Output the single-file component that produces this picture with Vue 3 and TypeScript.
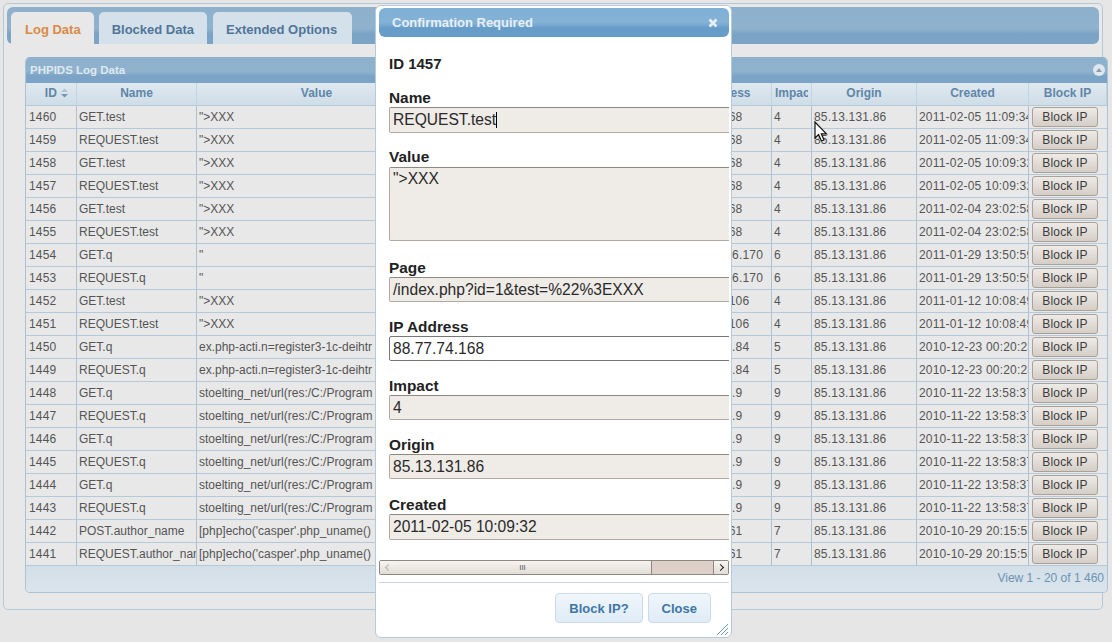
<script setup lang="ts">
interface LogRow {
  id: number;
  name: string;
  value: string;
  ip: string;
  impact: number;
  created: string;
}

const rows: LogRow[] = [
  { id: 1460, name: 'GET.test', value: '">XXX', ip: '88.77.74.168', impact: 4, created: '2011-02-05 11:09:34' },
  { id: 1459, name: 'REQUEST.test', value: '">XXX', ip: '88.77.74.168', impact: 4, created: '2011-02-05 11:09:34' },
  { id: 1458, name: 'GET.test', value: '">XXX', ip: '88.77.74.168', impact: 4, created: '2011-02-05 10:09:32' },
  { id: 1457, name: 'REQUEST.test', value: '">XXX', ip: '88.77.74.168', impact: 4, created: '2011-02-05 10:09:32' },
  { id: 1456, name: 'GET.test', value: '">XXX', ip: '88.77.74.168', impact: 4, created: '2011-02-04 23:02:58' },
  { id: 1455, name: 'REQUEST.test', value: '">XXX', ip: '88.77.74.168', impact: 4, created: '2011-02-04 23:02:58' },
  { id: 1454, name: 'GET.q', value: '"', ip: '213.149.146.170', impact: 6, created: '2011-01-29 13:50:59' },
  { id: 1453, name: 'REQUEST.q', value: '"', ip: '213.149.146.170', impact: 6, created: '2011-01-29 13:50:59' },
  { id: 1452, name: 'GET.test', value: '">XXX', ip: '88.77.174.106', impact: 4, created: '2011-01-12 10:08:49' },
  { id: 1451, name: 'REQUEST.test', value: '">XXX', ip: '88.77.174.106', impact: 4, created: '2011-01-12 10:08:49' },
  { id: 1450, name: 'GET.q', value: 'ex.php-acti.n=register3-1c-deihtr', ip: '88.177.174.84', impact: 5, created: '2010-12-23 00:20:23' },
  { id: 1449, name: 'REQUEST.q', value: 'ex.php-acti.n=register3-1c-deihtr', ip: '88.177.174.84', impact: 5, created: '2010-12-23 00:20:23' },
  { id: 1448, name: 'GET.q', value: 'stoelting_net/url(res:/C:/Program', ip: '88.177.174.9', impact: 9, created: '2010-11-22 13:58:37' },
  { id: 1447, name: 'REQUEST.q', value: 'stoelting_net/url(res:/C:/Program', ip: '88.177.174.9', impact: 9, created: '2010-11-22 13:58:37' },
  { id: 1446, name: 'GET.q', value: 'stoelting_net/url(res:/C:/Program', ip: '88.177.174.9', impact: 9, created: '2010-11-22 13:58:37' },
  { id: 1445, name: 'REQUEST.q', value: 'stoelting_net/url(res:/C:/Program', ip: '88.177.174.9', impact: 9, created: '2010-11-22 13:58:37' },
  { id: 1444, name: 'GET.q', value: 'stoelting_net/url(res:/C:/Program', ip: '88.177.174.9', impact: 9, created: '2010-11-22 13:58:37' },
  { id: 1443, name: 'REQUEST.q', value: 'stoelting_net/url(res:/C:/Program', ip: '88.177.174.9', impact: 9, created: '2010-11-22 13:58:37' },
  { id: 1442, name: 'POST.author_name', value: "[php]echo('casper'.php_uname()", ip: '88.77.74.161', impact: 7, created: '2010-10-29 20:15:53' },
  { id: 1441, name: 'REQUEST.author_name', value: "[php]echo('casper'.php_uname()", ip: '88.77.74.161', impact: 7, created: '2010-10-29 20:15:53' },
];

const tabs = ['Log Data', 'Blocked Data', 'Extended Options'];
const columns = [
  { title: 'ID', width: 51 },
  { title: 'Name', width: 120 },
  { title: 'Value', width: 240 },
  { title: 'Page', width: 231 },
  { title: 'IP Address', width: 104 },
  { title: 'Impact', width: 40 },
  { title: 'Origin', width: 105 },
  { title: 'Created', width: 112 },
  { title: 'Block IP', width: 78 },
];
</script>

<template>
  <div class="page">
    <div class="tabs-panel">
      <div class="tab-bar">
        <span v-for="(t, i) in tabs" :key="t" class="tab" :class="{ active: i === 0 }">{{ t }}</span>
      </div>
      <div class="grid">
        <div class="grid-title">
          <span>PHPIDS Log Data</span>
          <span class="collapse"><i></i></span>
        </div>
        <table>
          <colgroup>
            <col v-for="c in columns" :key="c.title" :style="{ width: c.width + 'px' }" />
          </colgroup>
          <thead>
            <tr>
              <th v-for="c in columns" :key="c.title">
                <div class="th-inner">
                  {{ c.title }}
                  <svg v-if="c.title === 'ID'" class="sort" width="9" height="10" viewBox="0 0 9 10">
                    <path d="M4.5 0.5 L8 4 H1 Z" fill="#b4c4d2" />
                    <path d="M4.5 9.5 L8 6 H1 Z" fill="#6f97b8" />
                  </svg>
                </div>
              </th>
            </tr>
          </thead>
          <tbody>
            <tr v-for="r in rows" :key="r.id">
              <td class="id-cell">{{ r.id }}</td>
              <td class="text-cell">{{ r.name }}</td>
              <td class="text-cell">{{ r.value }}</td>
              <td class="text-cell">/index.php?id=1</td>
              <td>{{ r.ip }}</td>
              <td>{{ r.impact }}</td>
              <td>85.13.131.86</td>
              <td>{{ r.created }}</td>
              <td class="btn-cell"><button class="block-btn">Block IP</button></td>
            </tr>
          </tbody>
        </table>
        <div class="grid-foot">View 1 - 20 of 1 460</div>
      </div>
    </div>

    <!-- mouse pointer caught in the shot -->
    <svg class="pointer" width="14" height="22" viewBox="0 0 14 22">
      <path d="M1 1 V17 L4.6 13.6 L7.4 20 L10 19 L7.3 12.8 H12.4 Z" fill="#fff" stroke="#111" stroke-width="1.2" />
    </svg>

    <div class="dialog">
      <div class="dialog-title">
        <span>Confirmation Required</span>
        <svg width="10" height="10" viewBox="0 0 10 10">
          <path d="M1.5 1.5 L8.5 8.5 M8.5 1.5 L1.5 8.5" stroke="#e8f0f6" stroke-width="2.6" />
        </svg>
      </div>
      <div class="dialog-body">
        <div class="scroll-inner">
          <h4>ID 1457</h4>
          <label>Name</label>
          <div class="field tall">REQUEST.test<span class="caret"></span></div>
          <label>Value</label>
          <div class="field area">"&gt;XXX</div>
          <label>Page</label>
          <div class="field">/index.php?id=1&amp;test=%22%3EXXX</div>
          <label>IP Address</label>
          <div class="field focused">88.77.74.168</div>
          <label>Impact</label>
          <div class="field">4</div>
          <label>Origin</label>
          <div class="field">85.13.131.86</div>
          <label class="nudge">Created</label>
          <div class="field tall">2011-02-05 10:09:32</div>
        </div>
        <div class="hscroll">
          <span class="arrow left"><i></i></span>
          <span class="thumb">III</span>
          <span class="track"></span>
          <span class="arrow right"><i></i></span>
        </div>
      </div>
      <div class="dialog-actions">
        <button class="action">Block IP?</button>
        <button class="action">Close</button>
      </div>
      <svg class="grip" width="13" height="13" viewBox="0 0 13 13">
        <path d="M12 1 L1 12 M12 5 L5 12 M12 9 L9 12" stroke="#6f94b0" stroke-width="1" />
      </svg>
    </div>
  </div>
</template>

<style>
html, body { margin: 0; background: #e6e6e6; }
</style>

<style scoped>
.page {
  position: relative;
  width: 1112px;
  height: 642px;
  overflow: hidden;
  box-sizing: border-box;
  padding: 3px 0 0 3px;
  font-family: "Liberation Sans", Arial, sans-serif;
  background: #e6e6e6;
}
.tabs-panel {
  width: 1100px;
  height: 607px;
  box-sizing: border-box;
  border: 1px solid #b4c8d8;
  border-radius: 5px;
  padding: 3px;
  background: #e8e8e8;
}
.tab-bar {
  height: 37px;
  box-sizing: border-box;
  display: flex;
  align-items: flex-end;
  gap: 5px;
  padding: 0 0 0 4px;
  border-radius: 6px;
  border-bottom: 1px solid #7ba4c6;
  background: linear-gradient(#8db1cd 0, #8fb2cd 60%, #7aa3c6 75%, #7ba4c7 100%);
}
.tab {
  height: 32px;
  box-sizing: border-box;
  padding: 10px 13px 0;
  margin-bottom: -1px;
  border-radius: 5px 5px 0 0;
  font-size: 13px;
  font-weight: bold;
  color: #4f7599;
  background: #d5e1ea;
  white-space: nowrap;
}
.tab:last-child { margin-left: 1px; padding-right: 15px; }
.tab.active {
  padding: 10px 13px 0 14px;
  color: #d98a45;
  background: #e8e8e8;
}
.grid {
  margin: 13px 0 0 18px;
  width: 1083px;
  box-sizing: border-box;
  border: 1px solid #a9c2d6;
  border-top-color: #8db1cd;
  border-radius: 5px;
  overflow: hidden;
  background: #e8e8e8;
  position: relative;
}
.grid-title {
  height: 25px;
  box-sizing: border-box;
  display: flex;
  align-items: center;
  justify-content: space-between;
  padding: 0 2px 2px 4px;
  font-size: 11.5px;
  font-weight: bold;
  color: #dfe9f0;
  background: linear-gradient(#8db1cd 0, #8fb2cd 55%, #7aa3c6 72%, #7ba4c7 100%);
}
.collapse {
  width: 12px;
  height: 12px;
  border-radius: 50%;
  background: #dfe7ee;
  display: flex;
  align-items: center;
  justify-content: center;
}
.collapse i {
  border: 3px solid transparent;
  border-bottom: 4px solid #8aa0b2;
  border-top: 0;
}
table {
  width: 1081px;
  table-layout: fixed;
  border-collapse: separate;
  border-spacing: 0;
}
th {
  height: 23px;
  padding: 0 0 3px;
  box-sizing: border-box;
  font-size: 12px;
  font-weight: bold;
  color: #5f86a8;
  border-right: 1px solid #c3d4e1;
  border-bottom: 1px solid #b4c9da;
  background: linear-gradient(#dfe8ef, #cfdde8);
}
.th-inner {
  margin: 0 3px;
  overflow: hidden;
  white-space: nowrap;
}
th:first-child .th-inner { padding-left: 12px; }
.sort { vertical-align: -1px; }
td {
  height: 23px;
  box-sizing: border-box;
  padding: 0 2px;
  font-size: 12px;
  letter-spacing: 0.2px;
  color: #555;
  white-space: nowrap;
  overflow: hidden;
  border-right: 1px solid #a9c2d6;
  border-bottom: 1px solid #b4c9da;
}
.id-cell { padding-left: 3px; }
.text-cell { letter-spacing: 0; }
.btn-cell { padding: 0 0 0 3px; border-right: 0; }
.block-btn {
  display: block;
  width: 66px;
  height: 20px;
  padding: 0;
  font: 12px "Liberation Sans", Arial, sans-serif;
  letter-spacing: 0.2px;
  color: #3c3c3c;
  border: 1px solid #a9a29a;
  border-radius: 3px;
  background: linear-gradient(#eeeae6, #d5cec7);
}
.grid-foot {
  height: 26px;
  box-sizing: border-box;
  padding: 5px 3px 0 0;
  text-align: right;
  font-size: 12px;
  color: #6c93b5;
  background: linear-gradient(#d3dfe8, #dae4ec);
}
.pointer {
  position: absolute;
  left: 814px;
  top: 121px;
}
.dialog {
  position: absolute;
  left: 375px;
  top: 5px;
  width: 357px;
  height: 633px;
  box-sizing: border-box;
  padding: 2px 2px 0 3px;
  border: 1px solid #b4cbdc;
  border-radius: 6px;
  background: #fff;
  display: flex;
  flex-direction: column;
}
.dialog-title {
  height: 29px;
  flex: none;
  box-sizing: border-box;
  display: flex;
  align-items: center;
  justify-content: space-between;
  padding: 0 11px 0 13px;
  border-radius: 6px;
  font-size: 13px;
  font-weight: bold;
  color: #e8f0f6;
  background: linear-gradient(#7fb0d6 0, #84b2d6 50%, #659cc8 70%, #669dc9 100%);
}
.dialog-body {
  width: 350px;
  flex: none;
  overflow: hidden;
}
.scroll-inner {
  padding: 18px 0 0 10px;
  height: 523px;
  box-sizing: border-box;
  overflow: hidden;
  color: #222;
}
h4 {
  margin: 0 0 17px;
  font-size: 15px;
  line-height: 17px;
}
label {
  display: block;
  font-size: 15.4px;
  line-height: 17px;
  font-weight: bold;
}
label.nudge { margin-top: 17px; }
.field {
  width: 520px;
  height: 25px;
  box-sizing: border-box;
  margin: 1px 0 16px;
  padding: 2px 3px;
  font-size: 15.6px;
  line-height: 19px;
  color: #2a2a2a;
  border: 1px solid #b5a8a0;
  border-top-color: #8f8880;
  border-radius: 2px;
  background: #efebe7;
  white-space: nowrap;
}
.field.tall { height: 26px; margin-bottom: 15px; }
.field.area {
  height: 74px;
  margin: 2px 0 18px;
  padding-top: 1px;
}
.field.focused {
  background: #fff;
  border-color: #777;
}
.field:has(+ .nudge) { margin-bottom: 0; }
.caret {
  display: inline-block;
  width: 1px;
  height: 16px;
  background: #000;
  vertical-align: -3px;
}
.hscroll {
  height: 15px;
  box-sizing: border-box;
  display: flex;
  border: 1px solid #8f8880;
  border-radius: 2px;
  background: #dcd0c8;
}
.arrow {
  width: 14px;
  flex: none;
  display: flex;
  align-items: center;
  justify-content: center;
  background: linear-gradient(#f7f5f3, #e2dcd6);
}
.arrow i {
  width: 4px;
  height: 4px;
  border-top: 1.5px solid #222;
  border-right: 1.5px solid #222;
  transform: rotate(45deg);
  margin-left: -2px;
}
.arrow.left i {
  border-color: #b8b2ac;
  transform: rotate(-135deg);
  margin: 0 0 0 3px;
}
.thumb {
  width: 258px;
  flex: none;
  box-sizing: border-box;
  text-align: center;
  font-size: 8px;
  line-height: 13px;
  color: #555;
  border-right: 1px solid #8f8880;
  background: linear-gradient(#f6f3f0, #e4ddd7);
}
.track { flex: 1; border-right: 1px solid #8f8880; }
.dialog-actions {
  margin-top: 7px;
  border-top: 1px solid #c9d6df;
  display: flex;
  justify-content: flex-end;
  gap: 5px;
  padding: 10px 18px 0 0;
}
.action {
  height: 30px;
  box-sizing: border-box;
  padding: 0 13px;
  font: bold 13px "Liberation Sans", Arial, sans-serif;
  color: #3f76a6;
  border: 1px solid #c8dcec;
  border-radius: 4px;
  background: linear-gradient(#f0f6fb, #dfecf6);
}
.grip {
  position: absolute;
  right: 2px;
  bottom: 1px;
}
</style>
